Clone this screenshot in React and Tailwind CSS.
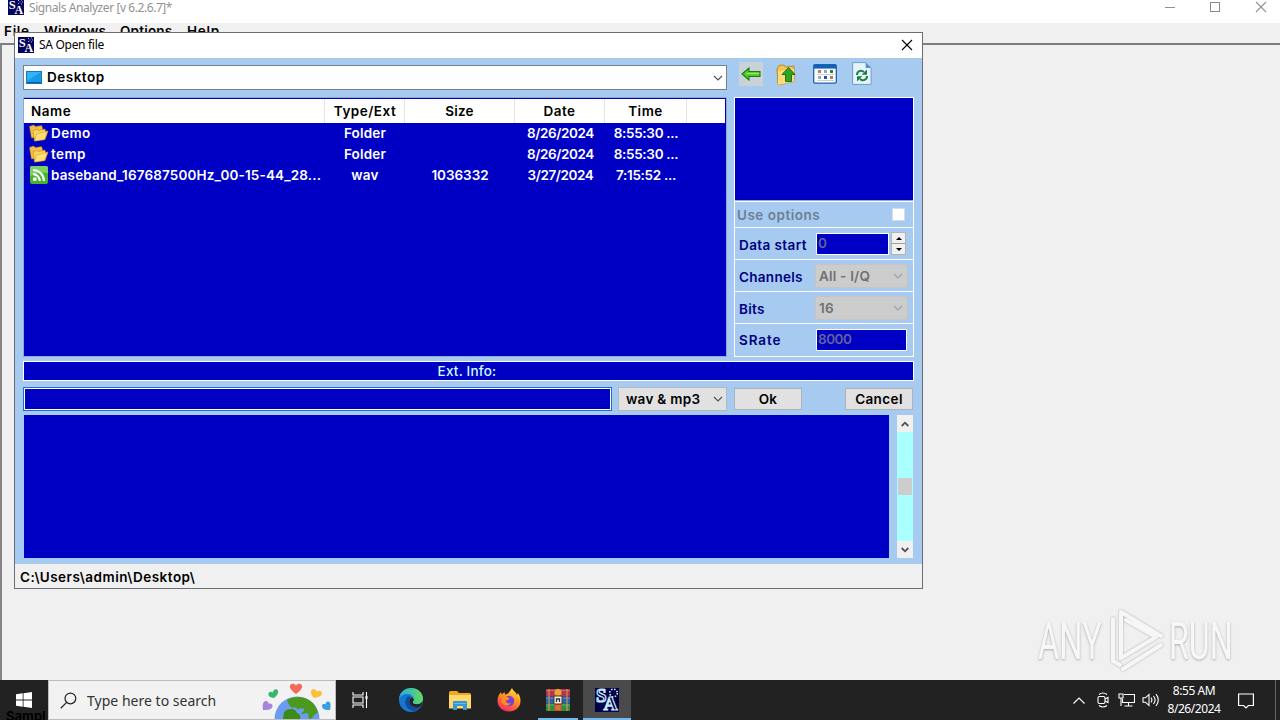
const files = [
  { icon: "folder", name: "Demo", type: "Folder", size: "", date: "8/26/2024", time: "8:55:30 ..." },
  { icon: "folder", name: "temp", type: "Folder", size: "", date: "8/26/2024", time: "8:55:30 ..." },
  {
    icon: "wav",
    name: "baseband_167687500Hz_00-15-44_28...",
    type: "wav",
    size: "1036332",
    date: "3/27/2024",
    time: "7:15:52 ...",
  },
];

function SaIcon({ className }) {
  return (
    <svg viewBox="0 0 16 16" className={className}>
      <rect width="16" height="16" fill="#04045c" />
      <text x="0.8" y="10.2" fontSize="12.5" fontWeight="700" fontFamily="Liberation Serif, serif" fill="#fff">S</text>
      <text x="6.6" y="14.8" fontSize="12" fontWeight="700" fontFamily="Liberation Serif, serif" fill="#fff">A</text>
      <path d="M10 1.500h1M13 1h1M11.500 3h1M14 3h1M10 4.500h1M13 5h1" stroke="#9db4ff" strokeWidth="1" />
    </svg>
  );
}

function SaTaskIcon() {
  return (
    <svg viewBox="0 0 24 24" className="size-6">
      <rect width="24" height="24" fill="#020246" />
      <g fill="#020246" stroke="#c8ecff" strokeWidth="1.2" fontWeight="700" fontFamily="Liberation Serif, serif">
        <text x="1" y="14" fontSize="19">S</text>
        <text x="8.6" y="22.4" fontSize="19.5">A</text>
      </g>
      <circle cx="18.5" cy="5" r="3.8" fill="none" stroke="#d6e6ff" strokeWidth="1.6" strokeDasharray="1.5 1.5" />
    </svg>
  );
}

function Chevron({ className }) {
  return (
    <svg viewBox="0 0 10 6" className={className} fill="none" stroke="currentColor" strokeWidth="1.1">
      <path d="M1 1l4 4 4-4" />
    </svg>
  );
}

function CloseIcon({ className }) {
  return (
    <svg viewBox="0 0 12 12" className={className} stroke="currentColor" strokeWidth="1.1">
      <path d="M1 1l10 10M11 1L1 11" />
    </svg>
  );
}

function FolderIcon() {
  return (
    <svg viewBox="0 0 20 18" className="-ml-px h-[18px] w-[21px] shrink-0">
      <path d="M1 2.500L5 1l2 1.600 6-1 1 2.400v8L3 14z" fill="#f0bf45" stroke="#b8831a" strokeWidth=".5" />
      <path d="M4.500 6.500l4-1 1.500 1 6.500-1.500.5 2.500 2.500-.5-3 8.500L6 17z" fill="#f9d45c" stroke="#c48b1c" strokeWidth=".6" />
      <path d="M8 10l11-2.600-3 8.100L6 17z" fill="#ffdf78" stroke="#cc962b" strokeWidth=".5" />
    </svg>
  );
}

function WavIcon() {
  return (
    <svg viewBox="0 0 18 18" className="ml-px mr-px size-[18px] shrink-0" fill="none">
      <rect width="18" height="18" rx="2" fill="#46b52c" />
      <path d="M0 2a2 2 0 012-2h14a2 2 0 012 2v5Q9 5 0 10z" fill="#7bd163" />
      <circle cx="4.800" cy="13.200" r="1.900" fill="#fff" />
      <path d="M3 8.200a6.800 6.800 0 016.800 6.800M3 4a11 11 0 0111 11" stroke="#fff" strokeWidth="2.200" />
    </svg>
  );
}

function Toolbar() {
  return (
    <div className="ml-3 flex items-start">
      {/* back */}
      <div className="-mt-[3px] flex size-6 items-center justify-center bg-[#c9d2d6]">
        <svg viewBox="0 0 20 14" className="h-[14px] w-5">
          <path d="M1 7l7-6v3.500h11v5H8V13z" fill="#4fc526" stroke="#1c7d14" strokeWidth="1.100" />
          <path d="M5 6.500h13" stroke="#98ea65" strokeWidth="1.400" />
        </svg>
      </div>
      {/* up one level */}
      <svg viewBox="0 0 20 22" className="-mt-px ml-[13px] h-[22px] w-5">
        <path d="M1 5l2-3.500 5-.5 1.500 2L18 2v15.500L2 21z" fill="#f5c64c" stroke="#b98521" strokeWidth=".9" />
        <path d="M2 7.500L8 6l10-1v12.500L2 21z" fill="#fbdc7d" />
        <path d="M12.500 3.500l6.500 7h-3.500v7h-6v-7H6z" fill="#2fa51d" stroke="#17690f" strokeWidth=".9" />
      </svg>
      {/* view */}
      <svg viewBox="0 0 24 20" className="-mt-px ml-[17px] h-5 w-6">
        <rect x=".7" y=".7" width="22.600" height="18.400" rx="1.300" fill="#fff" stroke="#1c62b0" strokeWidth="1.300" />
        <rect x="1" y="1" width="22" height="3.600" fill="#1260b8" />
        <path d="M5 7.500h3M17 13.500h3" stroke="#b87a60" strokeWidth="3" />
        <path d="M11 7.500h3M5 13.500h3" stroke="#8fa8c4" strokeWidth="3" />
        <path d="M17 7.500h3" stroke="#2c7c3e" strokeWidth="3" />
        <path d="M11 13.500h3" stroke="#214eb0" strokeWidth="3" />
        <path d="M4 10.500h17M4 16.500h17" stroke="#c7cede" strokeWidth="1" />
      </svg>
      {/* refresh */}
      <svg viewBox="0 0 20 23" className="-mt-[3px] ml-[15px] h-[23px] w-5" fill="none">
        <path d="M.6.6h13l5.500 5.500v16.300H.6z" fill="#e6f2fc" stroke="#6a9dcc" />
        <path d="M13.600.6v5.500h5.500z" fill="#5c92cf" />
        <path d="M5 13c0-4 4-5.500 7-3M15 14c0 4-4 5.500-7 3" stroke="#17803a" strokeWidth="2" />
        <path d="M15 7.500v5.300H9.700zM5 19.500v-5.300h5.300z" fill="#17803a" />
      </svg>
    </div>
  );
}

function FileList() {
  return (
    <div className="h-[260px] w-[704px] border border-[#8fa9c9] bg-[#0000c4] pt-px pr-px">
      <div className="flex h-6 items-center bg-white text-center text-black">
        <div className="h-full w-[301px] border-r border-[#e3e3ee] pl-[7px] text-left leading-6 tracking-[0.5px]">Name</div>
        <div className="h-full w-20 border-r border-[#e3e3ee] pl-px leading-6 tracking-[0.5px]">Type/Ext</div>
        <div className="h-full w-[110px] border-r border-[#e3e3ee] leading-6">Size</div>
        <div className="h-full w-[90px] border-r border-[#e3e3ee] leading-6 tracking-[0.5px]">Date</div>
        <div className="h-full w-[82px] border-r border-[#e3e3ee] leading-6 tracking-[0.5px]">Time</div>
      </div>
      {files.map((f) => (
        <div key={f.name} className="flex h-[21px] items-start pt-px text-center text-white">
          <div className="flex w-[301px] items-start gap-[2px] pl-[5px] whitespace-nowrap">
            {f.icon === "folder" ? <FolderIcon /> : <WavIcon />}
            <span className={f.icon === "wav" ? "tracking-[0.15px]" : "tracking-[0.4px]"}>{f.name}</span>
          </div>
          <div className="w-20">{f.type}</div>
          <div className="w-[110px] tracking-[-0.05px]">{f.size}</div>
          <div className="w-[90px] pl-px tracking-[-0.4px]">{f.date}</div>
          <div className="w-[82px] tracking-[-0.3px]">{f.time}</div>
        </div>
      ))}
    </div>
  );
}

function OptionsPanel() {
  return (
    <div className="flex h-[260px] w-[180px] flex-col border border-white text-[#000080]">
      <div className="h-[103px] border-b border-[#8fa9c9] bg-[#0000c4]" />
      <div className="flex h-[27px] items-center justify-between border-y border-white pr-[8px] pl-[2px] tracking-[0.5px] text-[#6d7f93]">
        <span>Use options</span>
        <span className="size-[13px] border border-[#d5dde6] bg-white" />
      </div>
      <div className="flex h-8 items-center border-b border-white pl-1">
        <span className="w-[77px] pt-[3px] tracking-[0.4px]">Data start</span>
        <span className="h-[22px] w-[73px] border border-white bg-[#0000c4] pl-px leading-[19px] text-[#62629c]">0</span>
        <div className="ml-[2px] flex h-[23px] w-[15px] flex-col border border-[#b4b4b4] bg-[#f0f0f0]">
          <div className="flex flex-1 items-center justify-center border-b border-[#a0a0a0]">
            <svg viewBox="0 0 6 3" className="h-[3px] w-[6px]"><path d="M3 0l3 3H0z" /></svg>
          </div>
          <div className="flex flex-1 items-center justify-center">
            <svg viewBox="0 0 6 3" className="h-[3px] w-[6px]"><path d="M3 3l3-3H0z" /></svg>
          </div>
        </div>
      </div>
      <div className="flex h-8 items-center border-b border-white pl-1">
        <span className="w-[76px] pt-[2px] tracking-[0.3px]">Channels</span>
        <div className="flex h-6 w-[93px] items-center justify-between border border-[#c4c4c4] bg-[#cccccc] pr-1 pl-[3px] text-[#707070]">
          All - I/Q
          <Chevron className="h-[6px] w-[10px] text-[#a0a0a0]" />
        </div>
      </div>
      <div className="flex h-8 items-center border-b border-white pl-1">
        <span className="w-[76px] pt-[2px] tracking-[0.3px]">Bits</span>
        <div className="flex h-6 w-[93px] items-center justify-between border border-[#c4c4c4] bg-[#cccccc] pr-1 pl-[3px] text-[#707070]">
          16
          <Chevron className="h-[6px] w-[10px] text-[#a0a0a0]" />
        </div>
      </div>
      <div className="flex flex-1 items-center pl-1">
        <span className="w-[77px] pb-px tracking-[0.9px]">SRate</span>
        <span className="h-[22px] w-[91px] border border-white bg-[#0000c4] pl-px leading-[19px] tracking-[-0.5px] text-[#62629c]">8000</span>
      </div>
    </div>
  );
}

function OpenDialog() {
  return (
    <div className="absolute top-8 left-[14px] flex h-[557px] w-[909px] flex-col border border-[#6b6f73] bg-[#f0f0f0]">
      {/* Title bar */}
      <div className="flex h-[25px] shrink-0 items-center bg-white pr-[9px] pb-px pl-[3px] font-['Noto_Sans',sans-serif] text-xs font-normal tracking-[-0.3px]">
        <SaIcon className="size-4" />
        <span className="ml-[5px] flex-1">SA Open file</span>
        <CloseIcon className="size-3" />
      </div>

      <div className="flex h-[506px] shrink-0 flex-col bg-[#a6caf0] px-2 pt-[7px]">
        <div className="flex h-[25px]">
          <div className="flex w-[704px] items-center border border-[#76828c] bg-white pr-[3px] pl-[2px]">
            <svg viewBox="0 0 16 13" className="h-[13px] w-4">
              <rect x=".5" y=".5" width="15" height="12" fill="#159be8" stroke="#1878bd" />
              <path d="M1 1h14L1 10z" fill="#32b4f6" />
              <path d="M1 11.500h14" stroke="#0a5c9a" />
            </svg>
            <span className="ml-[5px] flex-1 pb-px tracking-[0.5px]">Desktop</span>
            <Chevron className="h-[6px] w-[10px] text-[#505050]" />
          </div>
          <Toolbar />
        </div>

        <div className="mt-[7px] flex gap-[7px]">
          <FileList />
          <OptionsPanel />
        </div>

        <div className="mt-1 h-5 border border-white bg-[#0000c4] pr-[3px] text-center leading-[18px] font-medium text-[#c8ffff]">
          Ext. Info:
        </div>

        <div className="mt-[6px] flex h-6">
          <div className="w-[589px] border border-[#1c6fc9] bg-white p-px">
            <div className="h-full bg-[#0000c4]" />
          </div>
          <div className="ml-[6px] flex w-[109px] items-center justify-between border border-[#b4b9be] bg-[#e1e1e1] pr-[3px] pl-[7px] tracking-[0.3px] text-black">
            wav &amp; mp3
            <Chevron className="h-[6px] w-[10px] text-[#505050]" />
          </div>
          <button className="mt-px ml-[7px] h-[22px] w-[68px] border border-[#adb2b7] bg-[#e1e1e1]">Ok</button>
          <button className="mt-px ml-[43px] h-[22px] w-[68px] border border-[#adb2b7] bg-[#e1e1e1] tracking-[0.4px]">Cancel</button>
        </div>

        <div className="mt-1 flex h-[143px] justify-between pr-px pl-px">
          <div className="w-[865px] bg-[#0000c4]" />
          <div className="flex w-4 flex-col items-center bg-[#aaffff] text-[#505050]">
            <div className="flex h-[17px] w-full items-center justify-center bg-[#f0f0f0]">
              <svg viewBox="0 0 8 6" className="h-[6px] w-2" fill="none" stroke="currentColor" strokeWidth="1.800"><path d="M.7 5L4 1.700 7.300 5" /></svg>
            </div>
            <div className="mt-[46px] h-[17px] w-[14px] bg-[#cdcdcd]" />
            <div className="mt-auto flex h-[17px] w-full items-center justify-center bg-[#f0f0f0]">
              <svg viewBox="0 0 8 6" className="h-[6px] w-2" fill="none" stroke="currentColor" strokeWidth="1.800"><path d="M.7 1L4 4.300 7.300 1" /></svg>
            </div>
          </div>
        </div>
      </div>

      {/* Status bar */}
      <div className="flex flex-1 items-center pt-[2px] pl-[5px] tracking-[0.5px]">C:\Users\admin\Desktop\</div>
    </div>
  );
}

function Watermark() {
  return (
    <div className="absolute top-[608px] left-[1038px] flex h-[68px] w-[200px] items-center font-[Roboto,sans-serif] text-[51px] font-normal tracking-normal text-[#f7f7f7] [text-shadow:0_1px_3px_#a8a8a8]">
      <div className="w-[70px]"><span className="inline-block origin-left scale-x-[0.64]">ANY</span></div>
      <svg viewBox="0 0 58 66" className="-mt-1 h-[66px] w-[58px] shrink-0 drop-shadow-[0_0_1px_#aaaaaa]" fill="none" stroke="#f6f6f6" strokeWidth="4" strokeLinejoin="round" strokeLinecap="round">
        <path d="M13 51V5l40 24M5 12v42l7 4M13 51l35-21L18 13" />
        <path d="M15 62l38-24" />
      </svg>
      <div className="ml-[3px] w-[64px]"><span className="inline-block origin-left scale-x-[0.63]">RUN</span></div>
    </div>
  );
}

function EdgeIcon() {
  return (
    <svg viewBox="0 0 24 24" className="size-6">
      <defs>
        <linearGradient id="edgeTop" x1="0" x2="1">
          <stop offset="0" stopColor="#27a8e6" />
          <stop offset="1" stopColor="#63db5c" />
        </linearGradient>
      </defs>
      <circle cx="12" cy="12" r="12" fill="#1478cf" />
      <path d="M0 11.500C.4 4.500 5.500 0 12 0c7 0 12 5 12 10.500 0 4-3 5.800-6.500 5.800-2.500 0-3.800-1-3.800-2 0-.8 1-1.200 1-3C14.700 8 11.500 6 8.500 6 4.500 6 1 8 0 11.500z" fill="url(#edgeTop)" />
      <path d="M9 8.500c-5 3-3.500 13 5.500 14.500 3-.6 6-2.500 7.700-5.400-5 3-12 1-12.200-4.600 0-2 1-3.200 2-3.700-.8-.8-2-1-3-.8z" fill="#114a9b" />
      <path d="M13.700 14.300c0 1 1.300 2 3.800 2 3 0 5-1 6-3 0 2-1 4-2 5-4 2-11 .5-11.200-4.800 0-2 1-3.200 2-3.700 2 0 2.400 1.300 2.400 2 0 1.400-1 1.700-1 2.500z" fill="#232323" />
    </svg>
  );
}

function ExplorerIcon() {
  return (
    <svg viewBox="0 0 22 19" className="h-[19px] w-[22px]">
      <path d="M0 1.500Q0 0 1.500 0H8l2 2h10.500Q22 2 22 3.500V17H0z" fill="#eda91b" />
      <path d="M0 4h22v13.500H0z" fill="#ffd86b" />
      <path d="M4 19v-8q0-1 1-1h12q1 0 1 1v8h-4v-4H8v4z" fill="#3596d8" />
      <path d="M5 12.500h12" stroke="#62b9ec" strokeWidth="1" />
    </svg>
  );
}

function FirefoxIcon() {
  return (
    <svg viewBox="0 0 24 24" className="size-6">
      <defs>
        <linearGradient id="fox" x1=".8" y1="0" x2=".3" y2="1">
          <stop offset="0" stopColor="#ffe83b" />
          <stop offset=".45" stopColor="#ff9220" />
          <stop offset="1" stopColor="#f52566" />
        </linearGradient>
      </defs>
      <path d="M15 0c1 3 4 4 5 7l.8-2C23 8 23.500 10 23.500 13c0 6-5 10.500-11.500 10.500S.5 19 .5 12.800C.5 9 2 6 4 4l.8 2.500L7.500 4l.5 2.500c3-.5 4-2 5-3.500z" fill="url(#fox)" />
      <circle cx="12" cy="13" r="5.200" fill="#7541d0" />
      <path d="M5 9c3-2 6 0 7.500 1.500-1 2-3 1-3.500 2.500 0 2 3 3 5 2-2 4-8 3-9.500-1z" fill="#ff8a22" />
    </svg>
  );
}

function WinrarIcon() {
  return (
    <svg viewBox="0 0 24 24" className="size-6">
      <rect y="1" width="24" height="7.500" rx="1" fill="#b8334f" />
      <rect y="8.500" width="24" height="7" fill="#2f5fb5" />
      <rect y="15.500" width="24" height="7.500" rx="1" fill="#348a43" />
      <path d="M0 2.500h24M0 10h24M0 17h24" stroke="#e2b8c5" strokeOpacity=".4" />
      <path d="M3 1v22M21 1v22" stroke="#d0a643" strokeWidth="1" />
      <path d="M8.500 1h7v22h-7z" fill="#bd5a28" />
      <circle cx="12" cy="4.500" r="3.500" fill="#efa437" />
      <path d="M9.500 17h5v5h-5z" fill="#d9752b" />
      <rect x="8" y="8" width="8" height="8" rx="1" fill="#f4eee0" stroke="#4b3927" />
      <path d="M10.500 14v-3h3v3" fill="none" stroke="#333" strokeWidth="1.300" />
    </svg>
  );
}

function SearchArt() {
  return (
    <svg viewBox="0 0 72 38" className="h-[38px] w-[72px]">
      <path d="M35 13C31 10 28 7 29 4.500 30 2 33.500 2 35 4.500 36.500 2 40 2 41 4.500 42 7 39 10 35 13z" fill="#f36b56" />
      <path d="M13 17c-4-.5-6-2-5.500-4.500.5-2 3-2.500 4.500-1 0-2.500 2-4 4-3 2.500 2 .5 6-3 8.500z" fill="#37b76e" />
      <path d="M53 17c-3-3-4-7-2-8.500 2-1.300 4 0 4.500 2 2-1.500 5-1 5.500 1 .5 3-3 5-8 5.500z" fill="#fac036" />
      <path d="M2 29c-1-5 0-9 3-9 2 0 3 1.500 2.500 3 2-1 4 0 4 2 0 3-4 4.500-9.500 4z" fill="#a884dc" />
      <path d="M69 29c-5 .3-8-1-8-4 0-2 2-2.500 3.500-1.500 0-2 1-3.500 3-3 2.500 1 2.500 4 1.500 8.500z" fill="#3b9de3" />
      <circle cx="36" cy="38" r="22.500" fill="#6b9cf0" />
      <path d="M26 19c6-4 16-4 22 0 5 3 8 8 9 13-5 1-4 5-8 6-3-1 0-5-3-6-3 0-4 2-6 1 1-2 4-3 3-5-3-2-6 1-7 0-1-3-3-1-5-1-2-2-4-4-5-8z" fill="#4c9a1d" />
      <path d="M23 31c5-5 12-3 13 1 3 1 4 3 3 6H22z" fill="#3c8a17" />
    </svg>
  );
}

function Taskbar() {
  return (
    <div className="relative flex h-10 shrink-0 bg-[#222222] font-['Noto_Sans',sans-serif] font-normal tracking-normal text-white">
      <div className="flex w-12 items-center justify-center">
        <svg viewBox="0 0 16 16" className="size-4" fill="#fff">
          <path d="M0 2.200l6.700-.9v6.300H0zM7.500 1.200L16 0v7.600H7.500zM0 8.400h6.700v6.300L0 13.800zM7.500 8.400H16V16l-8.500-1.200z" />
        </svg>
      </div>
      {/* label of the window hidden behind the bar */}
      <span className="absolute top-[27px] left-[6px] h-[13px] w-[41px] overflow-hidden font-[Inter,sans-serif] text-[13px] leading-[18px] font-bold text-black">Sampl</span>

      <div className="flex w-72 items-center border border-[#bdbdbd] bg-[#f2f2f2] pl-[11px] text-[#333333]">
        <svg viewBox="0 0 18 18" className="size-[17px]" fill="none" stroke="#222" strokeWidth="1.300">
          <circle cx="11" cy="6.800" r="5.700" />
          <path d="M7 11L.8 17.200" />
        </svg>
        <span className="ml-[10px] flex-1 pt-px text-[14px] tracking-[0.02px]">Type here to search</span>
        <SearchArt />
        <span className="w-[2px]" />
      </div>

      <div className="flex w-12 items-center justify-center">
        <svg viewBox="0 0 17 16" className="h-4 w-[17px]" fill="none" stroke="#fff" strokeWidth="1.100">
          <path d="M1 0v3h10V0M1 16v-3h10v3M1 5h10v6H1zM14.500 0v16" />
          <path d="M13.500 5.500h2" strokeWidth="3" />
        </svg>
      </div>
      <div className="ml-[3px] flex w-12 items-center justify-center"><EdgeIcon /></div>
      <div className="ml-px flex w-12 items-center justify-center"><ExplorerIcon /></div>
      <div className="ml-px flex w-12 items-center justify-center"><FirefoxIcon /></div>
      <div className="flex w-[50px] items-center justify-center pr-px">
        <div className="flex h-full w-10 items-center justify-center border-b-2 border-[#76b9ed] pt-[2px]"><WinrarIcon /></div>
      </div>
      <div className="flex w-12 items-center justify-center border-b-2 border-[#76b9ed] bg-[#4a4a4a] pt-[2px]"><SaTaskIcon /></div>

      {/* tray */}
      <div className="ml-auto flex items-center">
        <svg viewBox="0 0 12 7" className="h-[7px] w-3" fill="none" stroke="#fff" strokeWidth="1.200"><path d="M.5 6.500L6 1l5.500 5.500" /></svg>
        <svg viewBox="0 0 12 16" className="ml-3 h-4 w-3" fill="none" stroke="#fff" strokeWidth="1.100">
          <rect x="1" y="4.500" width="7" height="7" rx="1.500" />
          <path d="M8 7l3-1.500v5L8 9M2 2.500q4-3 8 0M2 13.500q4 3 8 0" />
        </svg>
        <svg viewBox="0 0 17 14" className="ml-[9px] h-[14px] w-[17px]" fill="none" stroke="#fff" strokeWidth="1.100">
          <path d="M6 1.500h10.500v8H4.500V6M1 1h4v4H1zM3 5v8M10.500 9.500V13M6.500 13h8" />
        </svg>
        <svg viewBox="0 0 18 14" className="ml-[7px] h-[14px] w-[18px]" fill="none" stroke="#fff" strokeWidth="1.100">
          <path d="M1 4.800h2.500L7 1.500v11L3.500 9.200H1zM9 4.700q1.800 2.300 0 4.600M11.500 3q3.200 4 0 8M14 1.200q4.600 5.800 0 11.600" />
        </svg>
        <div className="ml-[7px] flex w-[54px] flex-col items-center text-xs leading-[18px] tracking-[-0.45px] whitespace-nowrap">
          <span>8:55 AM</span>
          <span>8/26/2024</span>
        </div>
        <svg viewBox="0 0 16 16" className="mt-px mr-[21px] ml-[17px] size-4" fill="none" stroke="#fff" strokeWidth="1.200">
          <path d="M.6 1h14.800v11.500h-5L8 15l-2.400-2.500h-5z" />
        </svg>
      </div>
      <div className="w-[5px] border-l border-[#666666]" />
    </div>
  );
}

export default function App() {
  return (
    <div className="relative flex h-[720px] w-[1280px] flex-col overflow-hidden bg-[#f0f0f0] font-[Inter,sans-serif] text-[13.5px] leading-[18px] font-semibold tracking-[0.2px] text-black">
      {/* Main window */}
      <div className="flex h-[23px] shrink-0 items-start bg-white pl-2 font-['Noto_Sans',sans-serif] text-xs font-normal tracking-[-0.43px] text-[#929292]">
        <SaIcon className="-mt-px size-4" />
        <span className="ml-[5px] flex-1 leading-4">Signals Analyzer [v 6.2.6.7]*</span>
        <div className="mt-[7px] h-px w-[10px] bg-[#929292]" />
        <div className="mt-[2px] ml-[35px] size-[10px] border border-[#888888]" />
        <CloseIcon className="mt-px mr-[13px] ml-[35px] size-3" />
      </div>
      <div className="flex h-5 shrink-0 items-start pl-1 leading-[17px] tracking-[0.2px]">
        <span className="w-10 tracking-[0.7px]">File</span>
        <span className="w-[76px]">Windows</span>
        <span className="w-[67px]">Options</span>
        <span className="tracking-[0.7px]">Help</span>
      </div>
      <div className="flex-1 border-t-2 border-l-2 border-t-[#7b7f7c] border-l-[#858585]" />
      <Taskbar />

      <OpenDialog />
      <Watermark />
    </div>
  );
}
